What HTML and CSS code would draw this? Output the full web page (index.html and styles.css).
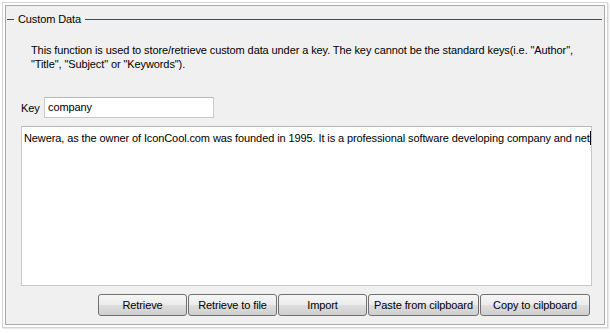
FILE: index.html
```html
<!DOCTYPE html>
<html>
<head>
<meta charset="utf-8">
<link rel="stylesheet" href="styles.css">
</head>
<body>
<div class="frame">
  <div class="panel">
    <div class="legend">
      <span class="lead"></span>
      <span class="legend-text">Custom Data</span>
      <span class="rule"></span>
    </div>
    <p class="desc">This function is used to store/retrieve custom data under a key. The key cannot be the standard keys(i.e. "Author",<br>"Title", "Subject" or "Keywords").</p>
    <div class="key-row">
      <label class="key-label">Key</label>
      <div class="input">company</div>
    </div>
    <div class="memo"><span class="memo-text">Newera, as the owner of IconCool.com was founded in 1995. It is a professional software developing company and net</span><span class="caret"></span></div>
    <div class="buttons">
      <div class="btn btn-sm">Retrieve</div>
      <div class="btn btn-sm">Retrieve to file</div>
      <div class="btn btn-sm">Import</div>
      <div class="btn btn-lg">Paste from cilpboard</div>
      <div class="btn btn-lg">Copy to cilpboard</div>
    </div>
  </div>
</div>
</body>
</html>
```

FILE: styles.css
```css
* { box-sizing: border-box; }
html, body { margin: 0; padding: 0; background: #ffffff; }
body {
  font-family: "Liberation Sans", Arial, sans-serif;
  font-size: 11px;
  letter-spacing: -0.1px;
  color: #000;
}
.frame {
  margin: 2px;
  width: 606px;
  height: 326px;
  border: 1px solid #d4d4d4;
  padding: 2px;
  box-shadow: 1px 1px 1px #e8e8e8;
}
.panel {
  height: 100%;
  border: 1px solid #a9a9a9;
  background: #f0f0f0;
  display: flex;
  flex-direction: column;
}
.legend {
  display: flex;
  align-items: center;
  height: 13px;
  margin-top: 7px;
  padding-left: 1px;
  padding-right: 2px;
}
.lead { width: 7px; height: 1px; background: #3f4b5a; }
.legend-text { padding: 0 4px 0 4px; line-height: 13px; color: #000; }
.rule { flex: 1; height: 1px; background: #3f4b5a; }
.desc {
  margin: 17px 0 0 0;
  padding-left: 25px;
  line-height: 14px;
}
.key-row {
  display: flex;
  align-items: center;
  margin-top: 26px;
  padding-left: 15px;
  height: 21px;
}
.key-label { width: 23px; }
.input {
  width: 170px;
  height: 21px;
  background: #fff;
  border: 1px solid #c9c9c9;
  border-top-color: #b8b8b8;
  padding: 0 0 0 3px;
  line-height: 19px;
}
.memo {
  margin: 8px 0 0 15px;
  width: 571px;
  height: 160px;
  background: #fff;
  border: 1px solid #c9c9c9;
  border-top-color: #b5b5b5;
  padding: 4px 0 0 2px;
  white-space: nowrap;
  overflow: hidden;
  display: flex;
  align-items: flex-start;
  line-height: 14px;
}
.memo-text { flex: none; }
.caret { width: 2px; height: 14px; background: #000; flex: none; }
.buttons {
  display: flex;
  justify-content: flex-end;
  margin-top: 8px;
  padding-right: 14px;
  gap: 1px;
}
.btn {
  height: 22px;
  border: 1px solid #707070;
  border-radius: 3px;
  background: linear-gradient(#f6f6f6 0%, #ebebeb 50%, #dddddd 51%, #cfcfcf 100%);
  text-align: center;
  line-height: 20px;
}
.btn-sm { width: 89px; }
.btn-lg { width: 111px; }
.btn-lg:last-child { width: 110px; }
```
